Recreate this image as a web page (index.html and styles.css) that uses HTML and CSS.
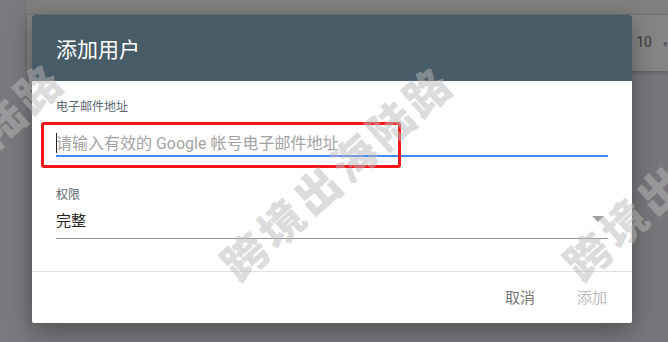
FILE: index.html
```html
<!DOCTYPE html>
<html>
<head>
<meta name="viewport" content="width=device-width, initial-scale=1">
<title>添加用户</title>
<link rel="stylesheet" href="styles.css">
</head>
<body>

<div class="page">
  <div class="rail"></div>
  <div class="main">
    <div class="topbar"></div>
    <div class="toolbar">
      <span class="pager">10<span class="pager-arrow">&#9662;</span></span>
    </div>
  </div>
</div>

<div class="dialog">
  <div class="dialog-head">添加用户</div>

  <div class="dialog-body">
    <label class="field-label" for="email">电子邮件地址</label>
    <div class="field field-active">
      <span class="caret"></span>
      <input type="email" id="email" placeholder="请输入有效的 Google 帐号电子邮件地址">
    </div>

    <label class="field-label field-label-2">权限</label>
    <div class="field field-select">
      <span class="select-value">完整</span>
      <span class="select-arrow"></span>
    </div>
  </div>

  <div class="dialog-foot">
    <button class="btn">取消</button>
    <button class="btn btn-off">添加</button>
  </div>

  <div class="highlight"></div>
</div>

<div class="mark mark-left">跨境出海陆路</div>
<div class="mark mark-mid">跨境出海陆路</div>
<div class="mark mark-right">跨境出海陆路</div>

</body>
</html>
```

FILE: styles.css
```css
* {
  box-sizing: border-box;
}

body {
  margin: 0;
  width: 668px;
  height: 342px;
  overflow: hidden;
  position: relative;
  background-color: #77777b;
  font-family: Roboto, "Noto Sans CJK SC", sans-serif;
}

/* page behind the modal */
.page {
  display: flex;
  height: 100%;
}

.rail {
  width: 27px;
  background-color: #7a7a7e;
}

.main {
  flex: 1;
  display: flex;
  flex-direction: column;
}

.topbar {
  height: 15px;
  background-color: #808080;
  border-bottom: 1px solid #747474;
}

.toolbar {
  height: 56px;
  background-color: #858585;
  box-shadow: 0 2px 4px rgba(0, 0, 0, 0.2);
  display: flex;
  justify-content: flex-end;
  align-items: center;
}

.pager {
  font-size: 14px;
  color: #3c3c3c;
  margin-right: 0;
  padding-bottom: 2px;
  white-space: nowrap;
}

.pager-arrow {
  font-size: 9px;
  color: #555;
  margin-left: 11px;
}

/* modal */
.dialog {
  position: absolute;
  left: 32px;
  top: 15px;
  width: 600px;
  height: 308px;
  background-color: white;
  border-radius: 2px;
  box-shadow: 0 6px 24px rgba(0, 0, 0, 0.35);
  overflow: hidden;
}

.dialog-head {
  height: 66px;
  background-color: #485c68;
  color: white;
  font-family: "Noto Sans CJK SC", sans-serif;
  font-size: 21px;
  padding: 0 24px;
  display: flex;
  align-items: center;
  padding-bottom: 1px;
}

.dialog-body {
  height: 190px;
  padding: 17px 24px 0 24px;
}

.field-label {
  display: block;
  font-family: "Noto Sans CJK SC", sans-serif;
  font-size: 12px;
  line-height: 16px;
  color: #5d6870;
}

.field-label-2 {
  margin-top: 29px;
}

.field {
  position: relative;
  height: 43px;
  display: flex;
  align-items: flex-end;
}

.field-active {
  border-bottom: 2px solid #4285f4;
}

.field input {
  width: 100%;
  border: none;
  outline: none;
  padding: 0 0 2px 0;
  font-family: Roboto, "Noto Sans CJK SC", sans-serif;
  font-size: 16px;
  line-height: 16px;
  background: transparent;
}

.field input::placeholder {
  color: #a3a3a3;
}

.caret {
  position: absolute;
  left: 0;
  bottom: 2px;
  width: 1px;
  height: 20px;
  background-color: #222;
}

.field-select {
  height: 37px;
  border-bottom: 1px solid #949494;
  justify-content: space-between;
  align-items: center;
}

.select-value {
  font-family: "Noto Sans CJK SC", sans-serif;
  font-size: 15px;
  color: #222;
  padding-bottom: 2px;
}

.select-arrow {
  width: 0;
  height: 0;
  border-left: 6px solid transparent;
  border-right: 6px solid transparent;
  border-top: 6px solid #9e9e9e;
  margin-right: 4px;
  margin-bottom: 2px;
}

.dialog-foot {
  height: 52px;
  border-top: 1px solid #e0e0e0;
  display: flex;
  justify-content: flex-end;
  align-items: center;
  gap: 42px;
  padding: 0 25px 2px 0;
}

.btn {
  background: none;
  border: none;
  padding: 0;
  font-family: "Noto Sans CJK SC", sans-serif;
  font-size: 15px;
  color: #777;
  cursor: pointer;
}

.btn-off {
  color: #bdbdbd;
  cursor: default;
}

/* red annotation box */
.highlight {
  position: absolute;
  left: 9px;
  top: 107px;
  width: 360px;
  height: 46px;
  border: 3px solid #f2171b;
  border-radius: 3px;
}

/* watermark */
.mark {
  position: absolute;
  width: 294px;
  height: 44px;
  line-height: 44px;
  font-family: "Noto Sans CJK SC", sans-serif;
  font-weight: 900;
  font-size: 44px;
  letter-spacing: 5px;
  color: rgba(185, 185, 185, 0.5);
  transform: rotate(-42deg);
  white-space: nowrap;
  pointer-events: none;
}

.mark-left {
  left: -200px;
  top: 146px;
}

.mark-mid {
  left: 189px;
  top: 149px;
}

.mark-right {
  left: 532px;
  top: 149px;
}
```
